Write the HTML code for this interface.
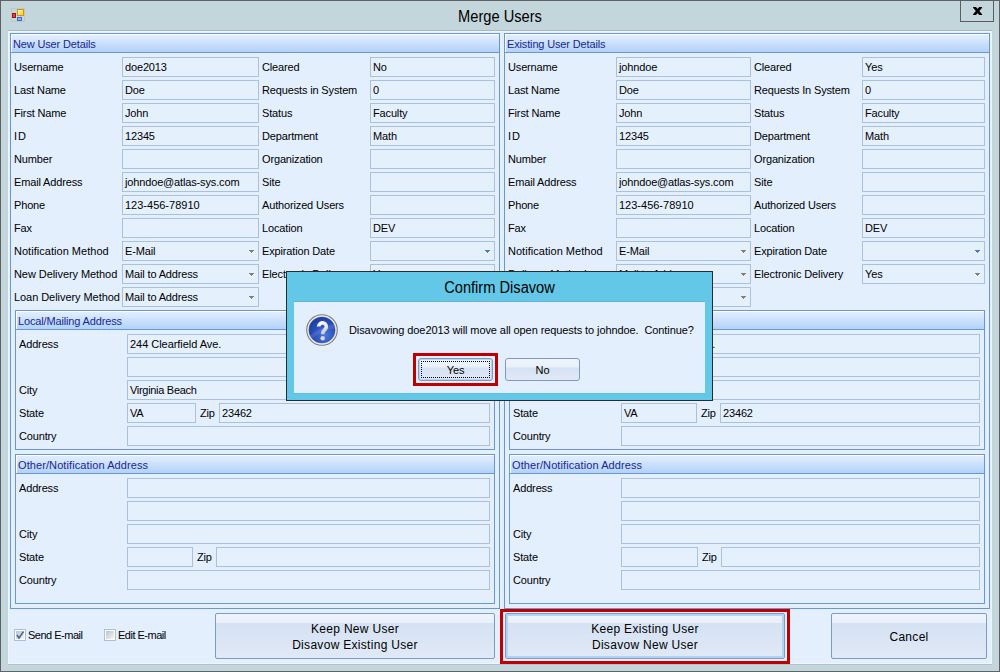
<!DOCTYPE html><html><head><meta charset="utf-8"><style>
html,body{margin:0;padding:0;}
body{width:1000px;height:672px;position:relative;overflow:hidden;background:#c3d6db;font-family:"Liberation Sans", sans-serif;}
.t{position:absolute;white-space:pre;line-height:20px;height:20px;letter-spacing:-0.15px;font-family:"Liberation Sans", sans-serif;}
.in{position:absolute;border:1px solid #abc0da;background:#e5f0fd;}
</style></head><body>
<div style="position:absolute;left:0px;top:0px;width:1000px;height:672px;border:1px solid #606166;box-sizing:border-box"></div>
<div style="position:absolute;left:11px;top:8px;width:14px;height:14px;box-sizing:border-box;border:1px solid #c8c4c2"></div>
<div style="position:absolute;left:17px;top:9px;width:7px;height:7px;box-sizing:border-box;border:1px solid #c79a10;background:linear-gradient(135deg,#fff3b0,#ffcc20)"></div>
<div style="position:absolute;left:12px;top:13px;width:4px;height:5px;box-sizing:border-box;border:1px solid #a81010;background:#e04040"></div>
<div style="position:absolute;left:17px;top:17px;width:5px;height:4px;box-sizing:border-box;border:1px solid #3a6ad0;background:#8ab4f8"></div>
<div class="t" style="left:0;width:1000px;text-align:center;top:6px;font-size:16px;line-height:22px;height:22px;color:#000;letter-spacing:0;transform:scaleX(0.915)">Merge Users</div>
<div style="position:absolute;left:960px;top:0px;width:34px;height:22px;border:1px solid #5a5d62;box-sizing:border-box"></div>
<svg style="position:absolute;left:972px;top:6px" width="12" height="10" viewBox="0 0 12 10"><defs><clipPath id="xc"><rect x="0" y="1" width="12" height="8"/></clipPath></defs><g clip-path="url(#xc)"><path d="M1.9 0.6 L9.3 9.4 M9.3 0.6 L1.9 9.4" stroke="#000" stroke-width="2.7" fill="none"/></g></svg>
<div style="position:absolute;left:8px;top:30px;width:984px;height:635px;background:#e3effd;border-top:1px solid #a9b9bd;border-bottom:1px solid #b4c3c7;box-sizing:border-box"></div>
<div style="position:absolute;left:8px;top:31px;width:984px;height:633px;border:1px solid #edf5fe;box-sizing:border-box"></div>
<div style="position:absolute;left:10px;top:33px;width:490px;height:576px;border:1px solid #6b97cf;box-sizing:border-box;background:#e3effd"></div>
<div style="position:absolute;left:11px;top:34px;width:488px;height:18px;box-sizing:border-box;border-left:1px solid #fff;border-top:1px solid #fff;background:linear-gradient(#e3eeff,#b1d2fb);border-bottom:0"></div>
<div style="position:absolute;left:10px;top:52px;width:490px;height:1px;background:#6b97cf"></div>
<div class="t" style="left:13px;top:34px;font-size:11px;color:#18288e;letter-spacing:-0.15px;">New User Details</div>
<div style="position:absolute;left:504px;top:33px;width:486px;height:576px;border:1px solid #6b97cf;box-sizing:border-box;background:#e3effd"></div>
<div style="position:absolute;left:505px;top:34px;width:484px;height:18px;box-sizing:border-box;border-left:1px solid #fff;border-top:1px solid #fff;background:linear-gradient(#e3eeff,#b1d2fb);border-bottom:0"></div>
<div style="position:absolute;left:504px;top:52px;width:486px;height:1px;background:#6b97cf"></div>
<div class="t" style="left:507px;top:34px;font-size:11px;color:#18288e;letter-spacing:-0.15px;">Existing User Details</div>
<div class="t" style="left:14px;top:57px;font-size:11px;color:#000;letter-spacing:-0.15px;">Username</div>
<div class="in" style="left:122px;top:57px;width:135px;height:18px;"></div>
<div class="t" style="left:125px;top:57px;font-size:11px;color:#000;letter-spacing:-0.15px;">doe2013</div>
<div class="t" style="left:262px;top:57px;font-size:11px;color:#000;letter-spacing:-0.15px;">Cleared</div>
<div class="in" style="left:370px;top:57px;width:123px;height:18px;"></div>
<div class="t" style="left:373px;top:57px;font-size:11px;color:#000;letter-spacing:-0.15px;">No</div>
<div class="t" style="left:14px;top:80px;font-size:11px;color:#000;letter-spacing:-0.15px;">Last Name</div>
<div class="in" style="left:122px;top:80px;width:135px;height:18px;"></div>
<div class="t" style="left:125px;top:80px;font-size:11px;color:#000;letter-spacing:-0.15px;">Doe</div>
<div class="t" style="left:262px;top:80px;font-size:11px;color:#000;letter-spacing:-0.15px;">Requests in System</div>
<div class="in" style="left:370px;top:80px;width:123px;height:18px;"></div>
<div class="t" style="left:373px;top:80px;font-size:11px;color:#000;letter-spacing:-0.15px;">0</div>
<div class="t" style="left:14px;top:103px;font-size:11px;color:#000;letter-spacing:-0.15px;">First Name</div>
<div class="in" style="left:122px;top:103px;width:135px;height:18px;"></div>
<div class="t" style="left:125px;top:103px;font-size:11px;color:#000;letter-spacing:-0.15px;">John</div>
<div class="t" style="left:262px;top:103px;font-size:11px;color:#000;letter-spacing:-0.15px;">Status</div>
<div class="in" style="left:370px;top:103px;width:123px;height:18px;"></div>
<div class="t" style="left:373px;top:103px;font-size:11px;color:#000;letter-spacing:-0.15px;">Faculty</div>
<div class="t" style="left:14px;top:126px;font-size:11px;color:#000;letter-spacing:1.0px;">ID</div>
<div class="in" style="left:122px;top:126px;width:135px;height:18px;"></div>
<div class="t" style="left:125px;top:126px;font-size:11px;color:#000;letter-spacing:-0.15px;">12345</div>
<div class="t" style="left:262px;top:126px;font-size:11px;color:#000;letter-spacing:-0.15px;">Department</div>
<div class="in" style="left:370px;top:126px;width:123px;height:18px;"></div>
<div class="t" style="left:373px;top:126px;font-size:11px;color:#000;letter-spacing:-0.15px;">Math</div>
<div class="t" style="left:14px;top:149px;font-size:11px;color:#000;letter-spacing:-0.15px;">Number</div>
<div class="in" style="left:122px;top:149px;width:135px;height:18px;"></div>
<div class="t" style="left:262px;top:149px;font-size:11px;color:#000;letter-spacing:-0.15px;">Organization</div>
<div class="in" style="left:370px;top:149px;width:123px;height:18px;"></div>
<div class="t" style="left:14px;top:172px;font-size:11px;color:#000;letter-spacing:-0.15px;">Email Address</div>
<div class="in" style="left:122px;top:172px;width:135px;height:18px;"></div>
<div class="t" style="left:125px;top:172px;font-size:11px;color:#000;letter-spacing:-0.15px;">johndoe@atlas-sys.com</div>
<div class="t" style="left:262px;top:172px;font-size:11px;color:#000;letter-spacing:-0.15px;">Site</div>
<div class="in" style="left:370px;top:172px;width:123px;height:18px;"></div>
<div class="t" style="left:14px;top:195px;font-size:11px;color:#000;letter-spacing:-0.15px;">Phone</div>
<div class="in" style="left:122px;top:195px;width:135px;height:18px;"></div>
<div class="t" style="left:125px;top:195px;font-size:11px;color:#000;letter-spacing:0.0px;">123-456-78910</div>
<div class="t" style="left:262px;top:195px;font-size:11px;color:#000;letter-spacing:-0.15px;">Authorized Users</div>
<div class="in" style="left:370px;top:195px;width:123px;height:18px;"></div>
<div class="t" style="left:14px;top:218px;font-size:11px;color:#000;letter-spacing:-0.15px;">Fax</div>
<div class="in" style="left:122px;top:218px;width:135px;height:18px;"></div>
<div class="t" style="left:262px;top:218px;font-size:11px;color:#000;letter-spacing:-0.15px;">Location</div>
<div class="in" style="left:370px;top:218px;width:123px;height:18px;"></div>
<div class="t" style="left:373px;top:218px;font-size:11px;color:#000;letter-spacing:-0.15px;">DEV</div>
<div class="t" style="left:14px;top:241px;font-size:11px;color:#000;letter-spacing:0.03px;">Notification Method</div>
<div class="in" style="left:122px;top:241px;width:135px;height:18px;"></div>
<div class="t" style="left:125px;top:241px;font-size:11px;color:#000;letter-spacing:-0.15px;">E-Mail</div>
<div style="position:absolute;left:249px;top:250px;width:5px;height:1px;background:#808080"></div><div style="position:absolute;left:250px;top:251px;width:3px;height:1px;background:#808080"></div><div style="position:absolute;left:251px;top:252px;width:1px;height:1px;background:#808080"></div><div style="position:absolute;left:249px;top:251px;width:1px;height:1px;background:#fff;opacity:.7"></div><div style="position:absolute;left:253px;top:251px;width:1px;height:1px;background:#fff;opacity:.7"></div><div style="position:absolute;left:250px;top:252px;width:1px;height:1px;background:#fff;opacity:.7"></div><div style="position:absolute;left:252px;top:252px;width:1px;height:1px;background:#fff;opacity:.7"></div><div style="position:absolute;left:251px;top:253px;width:1px;height:1px;background:#fff;opacity:.8"></div>
<div class="t" style="left:262px;top:241px;font-size:11px;color:#000;letter-spacing:-0.15px;">Expiration Date</div>
<div class="in" style="left:370px;top:241px;width:123px;height:18px;"></div>
<div style="position:absolute;left:485px;top:250px;width:5px;height:1px;background:#4b7bbb"></div><div style="position:absolute;left:486px;top:251px;width:3px;height:1px;background:#4b7bbb"></div><div style="position:absolute;left:487px;top:252px;width:1px;height:1px;background:#4b7bbb"></div><div style="position:absolute;left:485px;top:251px;width:1px;height:1px;background:#fff;opacity:.7"></div><div style="position:absolute;left:489px;top:251px;width:1px;height:1px;background:#fff;opacity:.7"></div><div style="position:absolute;left:486px;top:252px;width:1px;height:1px;background:#fff;opacity:.7"></div><div style="position:absolute;left:488px;top:252px;width:1px;height:1px;background:#fff;opacity:.7"></div><div style="position:absolute;left:487px;top:253px;width:1px;height:1px;background:#fff;opacity:.8"></div>
<div class="t" style="left:14px;top:264px;font-size:11px;color:#000;letter-spacing:-0.07px;">New Delivery Method</div>
<div class="in" style="left:122px;top:264px;width:135px;height:18px;"></div>
<div class="t" style="left:125px;top:264px;font-size:11px;color:#000;letter-spacing:-0.15px;">Mail to Address</div>
<div style="position:absolute;left:249px;top:273px;width:5px;height:1px;background:#808080"></div><div style="position:absolute;left:250px;top:274px;width:3px;height:1px;background:#808080"></div><div style="position:absolute;left:251px;top:275px;width:1px;height:1px;background:#808080"></div><div style="position:absolute;left:249px;top:274px;width:1px;height:1px;background:#fff;opacity:.7"></div><div style="position:absolute;left:253px;top:274px;width:1px;height:1px;background:#fff;opacity:.7"></div><div style="position:absolute;left:250px;top:275px;width:1px;height:1px;background:#fff;opacity:.7"></div><div style="position:absolute;left:252px;top:275px;width:1px;height:1px;background:#fff;opacity:.7"></div><div style="position:absolute;left:251px;top:276px;width:1px;height:1px;background:#fff;opacity:.8"></div>
<div class="t" style="left:262px;top:264px;font-size:11px;color:#000;letter-spacing:-0.1px;">Electronic Delivery</div>
<div class="in" style="left:370px;top:264px;width:123px;height:18px;"></div>
<div class="t" style="left:373px;top:264px;font-size:11px;color:#000;letter-spacing:-0.15px;">Yes</div>
<div style="position:absolute;left:485px;top:273px;width:5px;height:1px;background:#808080"></div><div style="position:absolute;left:486px;top:274px;width:3px;height:1px;background:#808080"></div><div style="position:absolute;left:487px;top:275px;width:1px;height:1px;background:#808080"></div><div style="position:absolute;left:485px;top:274px;width:1px;height:1px;background:#fff;opacity:.7"></div><div style="position:absolute;left:489px;top:274px;width:1px;height:1px;background:#fff;opacity:.7"></div><div style="position:absolute;left:486px;top:275px;width:1px;height:1px;background:#fff;opacity:.7"></div><div style="position:absolute;left:488px;top:275px;width:1px;height:1px;background:#fff;opacity:.7"></div><div style="position:absolute;left:487px;top:276px;width:1px;height:1px;background:#fff;opacity:.8"></div>
<div class="t" style="left:14px;top:287px;font-size:11px;color:#000;letter-spacing:-0.06px;">Loan Delivery Method</div>
<div class="in" style="left:122px;top:287px;width:135px;height:18px;"></div>
<div class="t" style="left:125px;top:287px;font-size:11px;color:#000;letter-spacing:-0.15px;">Mail to Address</div>
<div style="position:absolute;left:249px;top:296px;width:5px;height:1px;background:#808080"></div><div style="position:absolute;left:250px;top:297px;width:3px;height:1px;background:#808080"></div><div style="position:absolute;left:251px;top:298px;width:1px;height:1px;background:#808080"></div><div style="position:absolute;left:249px;top:297px;width:1px;height:1px;background:#fff;opacity:.7"></div><div style="position:absolute;left:253px;top:297px;width:1px;height:1px;background:#fff;opacity:.7"></div><div style="position:absolute;left:250px;top:298px;width:1px;height:1px;background:#fff;opacity:.7"></div><div style="position:absolute;left:252px;top:298px;width:1px;height:1px;background:#fff;opacity:.7"></div><div style="position:absolute;left:251px;top:299px;width:1px;height:1px;background:#fff;opacity:.8"></div>
<div class="t" style="left:508px;top:57px;font-size:11px;color:#000;letter-spacing:-0.15px;">Username</div>
<div class="in" style="left:616px;top:57px;width:133px;height:18px;"></div>
<div class="t" style="left:619px;top:57px;font-size:11px;color:#000;letter-spacing:-0.15px;">johndoe</div>
<div class="t" style="left:754px;top:57px;font-size:11px;color:#000;letter-spacing:-0.15px;">Cleared</div>
<div class="in" style="left:862px;top:57px;width:121px;height:18px;"></div>
<div class="t" style="left:865px;top:57px;font-size:11px;color:#000;letter-spacing:-0.15px;">Yes</div>
<div class="t" style="left:508px;top:80px;font-size:11px;color:#000;letter-spacing:-0.15px;">Last Name</div>
<div class="in" style="left:616px;top:80px;width:133px;height:18px;"></div>
<div class="t" style="left:619px;top:80px;font-size:11px;color:#000;letter-spacing:-0.15px;">Doe</div>
<div class="t" style="left:754px;top:80px;font-size:11px;color:#000;letter-spacing:-0.15px;">Requests In System</div>
<div class="in" style="left:862px;top:80px;width:121px;height:18px;"></div>
<div class="t" style="left:865px;top:80px;font-size:11px;color:#000;letter-spacing:-0.15px;">0</div>
<div class="t" style="left:508px;top:103px;font-size:11px;color:#000;letter-spacing:-0.15px;">First Name</div>
<div class="in" style="left:616px;top:103px;width:133px;height:18px;"></div>
<div class="t" style="left:619px;top:103px;font-size:11px;color:#000;letter-spacing:-0.15px;">John</div>
<div class="t" style="left:754px;top:103px;font-size:11px;color:#000;letter-spacing:-0.15px;">Status</div>
<div class="in" style="left:862px;top:103px;width:121px;height:18px;"></div>
<div class="t" style="left:865px;top:103px;font-size:11px;color:#000;letter-spacing:-0.15px;">Faculty</div>
<div class="t" style="left:508px;top:126px;font-size:11px;color:#000;letter-spacing:1.0px;">ID</div>
<div class="in" style="left:616px;top:126px;width:133px;height:18px;"></div>
<div class="t" style="left:619px;top:126px;font-size:11px;color:#000;letter-spacing:-0.15px;">12345</div>
<div class="t" style="left:754px;top:126px;font-size:11px;color:#000;letter-spacing:-0.15px;">Department</div>
<div class="in" style="left:862px;top:126px;width:121px;height:18px;"></div>
<div class="t" style="left:865px;top:126px;font-size:11px;color:#000;letter-spacing:-0.15px;">Math</div>
<div class="t" style="left:508px;top:149px;font-size:11px;color:#000;letter-spacing:-0.15px;">Number</div>
<div class="in" style="left:616px;top:149px;width:133px;height:18px;"></div>
<div class="t" style="left:754px;top:149px;font-size:11px;color:#000;letter-spacing:-0.15px;">Organization</div>
<div class="in" style="left:862px;top:149px;width:121px;height:18px;"></div>
<div class="t" style="left:508px;top:172px;font-size:11px;color:#000;letter-spacing:-0.15px;">Email Address</div>
<div class="in" style="left:616px;top:172px;width:133px;height:18px;"></div>
<div class="t" style="left:619px;top:172px;font-size:11px;color:#000;letter-spacing:-0.15px;">johndoe@atlas-sys.com</div>
<div class="t" style="left:754px;top:172px;font-size:11px;color:#000;letter-spacing:-0.15px;">Site</div>
<div class="in" style="left:862px;top:172px;width:121px;height:18px;"></div>
<div class="t" style="left:508px;top:195px;font-size:11px;color:#000;letter-spacing:-0.15px;">Phone</div>
<div class="in" style="left:616px;top:195px;width:133px;height:18px;"></div>
<div class="t" style="left:619px;top:195px;font-size:11px;color:#000;letter-spacing:0.0px;">123-456-78910</div>
<div class="t" style="left:754px;top:195px;font-size:11px;color:#000;letter-spacing:-0.15px;">Authorized Users</div>
<div class="in" style="left:862px;top:195px;width:121px;height:18px;"></div>
<div class="t" style="left:508px;top:218px;font-size:11px;color:#000;letter-spacing:-0.15px;">Fax</div>
<div class="in" style="left:616px;top:218px;width:133px;height:18px;"></div>
<div class="t" style="left:754px;top:218px;font-size:11px;color:#000;letter-spacing:-0.15px;">Location</div>
<div class="in" style="left:862px;top:218px;width:121px;height:18px;"></div>
<div class="t" style="left:865px;top:218px;font-size:11px;color:#000;letter-spacing:-0.15px;">DEV</div>
<div class="t" style="left:508px;top:241px;font-size:11px;color:#000;letter-spacing:0.03px;">Notification Method</div>
<div class="in" style="left:616px;top:241px;width:133px;height:18px;"></div>
<div class="t" style="left:619px;top:241px;font-size:11px;color:#000;letter-spacing:-0.15px;">E-Mail</div>
<div style="position:absolute;left:741px;top:250px;width:5px;height:1px;background:#808080"></div><div style="position:absolute;left:742px;top:251px;width:3px;height:1px;background:#808080"></div><div style="position:absolute;left:743px;top:252px;width:1px;height:1px;background:#808080"></div><div style="position:absolute;left:741px;top:251px;width:1px;height:1px;background:#fff;opacity:.7"></div><div style="position:absolute;left:745px;top:251px;width:1px;height:1px;background:#fff;opacity:.7"></div><div style="position:absolute;left:742px;top:252px;width:1px;height:1px;background:#fff;opacity:.7"></div><div style="position:absolute;left:744px;top:252px;width:1px;height:1px;background:#fff;opacity:.7"></div><div style="position:absolute;left:743px;top:253px;width:1px;height:1px;background:#fff;opacity:.8"></div>
<div class="t" style="left:754px;top:241px;font-size:11px;color:#000;letter-spacing:-0.15px;">Expiration Date</div>
<div class="in" style="left:862px;top:241px;width:121px;height:18px;"></div>
<div style="position:absolute;left:975px;top:250px;width:5px;height:1px;background:#4b7bbb"></div><div style="position:absolute;left:976px;top:251px;width:3px;height:1px;background:#4b7bbb"></div><div style="position:absolute;left:977px;top:252px;width:1px;height:1px;background:#4b7bbb"></div><div style="position:absolute;left:975px;top:251px;width:1px;height:1px;background:#fff;opacity:.7"></div><div style="position:absolute;left:979px;top:251px;width:1px;height:1px;background:#fff;opacity:.7"></div><div style="position:absolute;left:976px;top:252px;width:1px;height:1px;background:#fff;opacity:.7"></div><div style="position:absolute;left:978px;top:252px;width:1px;height:1px;background:#fff;opacity:.7"></div><div style="position:absolute;left:977px;top:253px;width:1px;height:1px;background:#fff;opacity:.8"></div>
<div class="t" style="left:508px;top:264px;font-size:11px;color:#000;letter-spacing:-0.07px;">Delivery Method</div>
<div class="in" style="left:616px;top:264px;width:133px;height:18px;"></div>
<div class="t" style="left:619px;top:264px;font-size:11px;color:#000;letter-spacing:-0.15px;">Mail to Address</div>
<div style="position:absolute;left:741px;top:273px;width:5px;height:1px;background:#808080"></div><div style="position:absolute;left:742px;top:274px;width:3px;height:1px;background:#808080"></div><div style="position:absolute;left:743px;top:275px;width:1px;height:1px;background:#808080"></div><div style="position:absolute;left:741px;top:274px;width:1px;height:1px;background:#fff;opacity:.7"></div><div style="position:absolute;left:745px;top:274px;width:1px;height:1px;background:#fff;opacity:.7"></div><div style="position:absolute;left:742px;top:275px;width:1px;height:1px;background:#fff;opacity:.7"></div><div style="position:absolute;left:744px;top:275px;width:1px;height:1px;background:#fff;opacity:.7"></div><div style="position:absolute;left:743px;top:276px;width:1px;height:1px;background:#fff;opacity:.8"></div>
<div class="t" style="left:754px;top:264px;font-size:11px;color:#000;letter-spacing:-0.1px;">Electronic Delivery</div>
<div class="in" style="left:862px;top:264px;width:121px;height:18px;"></div>
<div class="t" style="left:865px;top:264px;font-size:11px;color:#000;letter-spacing:-0.15px;">Yes</div>
<div style="position:absolute;left:975px;top:273px;width:5px;height:1px;background:#808080"></div><div style="position:absolute;left:976px;top:274px;width:3px;height:1px;background:#808080"></div><div style="position:absolute;left:977px;top:275px;width:1px;height:1px;background:#808080"></div><div style="position:absolute;left:975px;top:274px;width:1px;height:1px;background:#fff;opacity:.7"></div><div style="position:absolute;left:979px;top:274px;width:1px;height:1px;background:#fff;opacity:.7"></div><div style="position:absolute;left:976px;top:275px;width:1px;height:1px;background:#fff;opacity:.7"></div><div style="position:absolute;left:978px;top:275px;width:1px;height:1px;background:#fff;opacity:.7"></div><div style="position:absolute;left:977px;top:276px;width:1px;height:1px;background:#fff;opacity:.8"></div>
<div class="t" style="left:508px;top:287px;font-size:11px;color:#000;letter-spacing:-0.06px;">Loan Delivery Method</div>
<div class="in" style="left:616px;top:287px;width:133px;height:18px;"></div>
<div class="t" style="left:619px;top:287px;font-size:11px;color:#000;letter-spacing:-0.15px;">Mail to Address</div>
<div style="position:absolute;left:741px;top:296px;width:5px;height:1px;background:#808080"></div><div style="position:absolute;left:742px;top:297px;width:3px;height:1px;background:#808080"></div><div style="position:absolute;left:743px;top:298px;width:1px;height:1px;background:#808080"></div><div style="position:absolute;left:741px;top:297px;width:1px;height:1px;background:#fff;opacity:.7"></div><div style="position:absolute;left:745px;top:297px;width:1px;height:1px;background:#fff;opacity:.7"></div><div style="position:absolute;left:742px;top:298px;width:1px;height:1px;background:#fff;opacity:.7"></div><div style="position:absolute;left:744px;top:298px;width:1px;height:1px;background:#fff;opacity:.7"></div><div style="position:absolute;left:743px;top:299px;width:1px;height:1px;background:#fff;opacity:.8"></div>
<div style="position:absolute;left:15px;top:310px;width:480px;height:140px;border:1px solid #6b97cf;box-sizing:border-box;background:#e3effd"></div>
<div style="position:absolute;left:16px;top:311px;width:478px;height:18px;box-sizing:border-box;border-left:1px solid #fff;border-top:1px solid #fff;background:linear-gradient(#e3eeff,#b1d2fb);border-bottom:0"></div>
<div style="position:absolute;left:15px;top:329px;width:480px;height:1px;background:#6b97cf"></div>
<div class="t" style="left:18px;top:311px;font-size:11px;color:#18288e;letter-spacing:-0.15px;">Local/Mailing Address</div>
<div class="t" style="left:19px;top:334px;font-size:11px;color:#000;letter-spacing:-0.15px;">Address</div>
<div class="in" style="left:127px;top:334px;width:361px;height:18px;"></div>
<div class="t" style="left:130px;top:334px;font-size:11px;color:#000;letter-spacing:-0.04px;">244 Clearfield Ave.</div>
<div class="in" style="left:127px;top:357px;width:361px;height:18px;"></div>
<div class="t" style="left:19px;top:380px;font-size:11px;color:#000;letter-spacing:-0.15px;">City</div>
<div class="in" style="left:127px;top:380px;width:361px;height:18px;"></div>
<div class="t" style="left:130px;top:380px;font-size:11px;color:#000;letter-spacing:-0.3px;">Virginia Beach</div>
<div class="t" style="left:19px;top:403px;font-size:11px;color:#000;letter-spacing:-0.15px;">State</div>
<div class="in" style="left:127px;top:403px;width:67px;height:18px;"></div>
<div class="t" style="left:130px;top:403px;font-size:11px;color:#000;letter-spacing:-0.15px;">VA</div>
<div class="t" style="left:200px;top:403px;font-size:11px;color:#000;letter-spacing:-0.15px;">Zip</div>
<div class="in" style="left:219px;top:403px;width:269px;height:18px;"></div>
<div class="t" style="left:222px;top:403px;font-size:11px;color:#000;letter-spacing:-0.15px;">23462</div>
<div class="t" style="left:19px;top:426px;font-size:11px;color:#000;letter-spacing:-0.15px;">Country</div>
<div class="in" style="left:127px;top:426px;width:361px;height:18px;"></div>
<div style="position:absolute;left:15px;top:454px;width:480px;height:150px;border:1px solid #6b97cf;box-sizing:border-box;background:#e3effd"></div>
<div style="position:absolute;left:16px;top:455px;width:478px;height:18px;box-sizing:border-box;border-left:1px solid #fff;border-top:1px solid #fff;background:linear-gradient(#e3eeff,#b1d2fb);border-bottom:0"></div>
<div style="position:absolute;left:15px;top:473px;width:480px;height:1px;background:#6b97cf"></div>
<div class="t" style="left:18px;top:455px;font-size:11px;color:#18288e;letter-spacing:0.09px;">Other/Notification Address</div>
<div class="t" style="left:19px;top:478px;font-size:11px;color:#000;letter-spacing:-0.15px;">Address</div>
<div class="in" style="left:127px;top:478px;width:361px;height:18px;"></div>
<div class="in" style="left:127px;top:501px;width:361px;height:18px;"></div>
<div class="t" style="left:19px;top:524px;font-size:11px;color:#000;letter-spacing:-0.15px;">City</div>
<div class="in" style="left:127px;top:524px;width:361px;height:18px;"></div>
<div class="t" style="left:19px;top:547px;font-size:11px;color:#000;letter-spacing:-0.15px;">State</div>
<div class="in" style="left:127px;top:547px;width:64px;height:18px;"></div>
<div class="t" style="left:197px;top:547px;font-size:11px;color:#000;letter-spacing:-0.15px;">Zip</div>
<div class="in" style="left:216px;top:547px;width:272px;height:18px;"></div>
<div class="t" style="left:19px;top:570px;font-size:11px;color:#000;letter-spacing:-0.15px;">Country</div>
<div class="in" style="left:127px;top:570px;width:361px;height:18px;"></div>
<div style="position:absolute;left:509px;top:310px;width:476px;height:140px;border:1px solid #6b97cf;box-sizing:border-box;background:#e3effd"></div>
<div style="position:absolute;left:510px;top:311px;width:474px;height:18px;box-sizing:border-box;border-left:1px solid #fff;border-top:1px solid #fff;background:linear-gradient(#e3eeff,#b1d2fb);border-bottom:0"></div>
<div style="position:absolute;left:509px;top:329px;width:476px;height:1px;background:#6b97cf"></div>
<div class="t" style="left:512px;top:311px;font-size:11px;color:#18288e;letter-spacing:-0.15px;">Local/Mailing Address</div>
<div class="t" style="left:513px;top:334px;font-size:11px;color:#000;letter-spacing:-0.15px;">Address</div>
<div class="in" style="left:621px;top:334px;width:357px;height:18px;"></div>
<div class="t" style="left:624px;top:334px;font-size:11px;color:#000;letter-spacing:-0.04px;">244 Clearfield Ave.</div>
<div class="in" style="left:621px;top:357px;width:357px;height:18px;"></div>
<div class="t" style="left:513px;top:380px;font-size:11px;color:#000;letter-spacing:-0.15px;">City</div>
<div class="in" style="left:621px;top:380px;width:357px;height:18px;"></div>
<div class="t" style="left:624px;top:380px;font-size:11px;color:#000;letter-spacing:-0.3px;">Virginia Beach</div>
<div class="t" style="left:513px;top:403px;font-size:11px;color:#000;letter-spacing:-0.15px;">State</div>
<div class="in" style="left:621px;top:403px;width:74px;height:18px;"></div>
<div class="t" style="left:624px;top:403px;font-size:11px;color:#000;letter-spacing:-0.15px;">VA</div>
<div class="t" style="left:701px;top:403px;font-size:11px;color:#000;letter-spacing:-0.15px;">Zip</div>
<div class="in" style="left:720px;top:403px;width:258px;height:18px;"></div>
<div class="t" style="left:723px;top:403px;font-size:11px;color:#000;letter-spacing:-0.15px;">23462</div>
<div class="t" style="left:513px;top:426px;font-size:11px;color:#000;letter-spacing:-0.15px;">Country</div>
<div class="in" style="left:621px;top:426px;width:357px;height:18px;"></div>
<div style="position:absolute;left:509px;top:454px;width:476px;height:150px;border:1px solid #6b97cf;box-sizing:border-box;background:#e3effd"></div>
<div style="position:absolute;left:510px;top:455px;width:474px;height:18px;box-sizing:border-box;border-left:1px solid #fff;border-top:1px solid #fff;background:linear-gradient(#e3eeff,#b1d2fb);border-bottom:0"></div>
<div style="position:absolute;left:509px;top:473px;width:476px;height:1px;background:#6b97cf"></div>
<div class="t" style="left:512px;top:455px;font-size:11px;color:#18288e;letter-spacing:0.09px;">Other/Notification Address</div>
<div class="t" style="left:513px;top:478px;font-size:11px;color:#000;letter-spacing:-0.15px;">Address</div>
<div class="in" style="left:621px;top:478px;width:357px;height:18px;"></div>
<div class="in" style="left:621px;top:501px;width:357px;height:18px;"></div>
<div class="t" style="left:513px;top:524px;font-size:11px;color:#000;letter-spacing:-0.15px;">City</div>
<div class="in" style="left:621px;top:524px;width:357px;height:18px;"></div>
<div class="t" style="left:513px;top:547px;font-size:11px;color:#000;letter-spacing:-0.15px;">State</div>
<div class="in" style="left:621px;top:547px;width:75px;height:18px;"></div>
<div class="t" style="left:702px;top:547px;font-size:11px;color:#000;letter-spacing:-0.15px;">Zip</div>
<div class="in" style="left:721px;top:547px;width:257px;height:18px;"></div>
<div class="t" style="left:513px;top:570px;font-size:11px;color:#000;letter-spacing:-0.15px;">Country</div>
<div class="in" style="left:621px;top:570px;width:357px;height:18px;"></div>
<div style="position:absolute;left:14px;top:629px;width:12px;height:12px;box-sizing:border-box;border:1px solid #a9bfda;background:#fff"></div>
<div style="position:absolute;left:16px;top:631px;width:8px;height:8px;background:linear-gradient(135deg,#b9c2cc,#f6f7f9)"></div>
<svg style="position:absolute;left:14px;top:629px" width="12" height="12" viewBox="0 0 12 12"><path d="M3 6 L5 9 L9.5 2.5" stroke="#4a6a98" stroke-width="1.6" fill="none"/></svg>
<div class="t" style="left:28px;top:625px;font-size:11px;color:#000;letter-spacing:-0.5px;">Send E-mail</div>
<div style="position:absolute;left:104px;top:629px;width:12px;height:12px;box-sizing:border-box;border:1px solid #a9bfda;background:#fff"></div>
<div style="position:absolute;left:106px;top:631px;width:8px;height:8px;background:linear-gradient(135deg,#b9c2cc,#f6f7f9)"></div>
<div class="t" style="left:118px;top:625px;font-size:11px;color:#000;letter-spacing:-0.5px;">Edit E-mail</div>
<div style="position:absolute;left:215px;top:613px;width:280px;height:46px;box-sizing:border-box;border:1px solid #7f9abd;border-radius:2px;background:linear-gradient(#eef4fb 0%,#e9f0fa 20%,#d5e2f3 21%,#e0e9f6 100%);"></div>
<div class="t" style="left:215px;width:280px;text-align:center;top:619px;font-size:12px;color:#000;letter-spacing:0.3px">Keep New User</div>
<div class="t" style="left:215px;width:280px;text-align:center;top:635px;font-size:12px;color:#000;letter-spacing:0.3px">Disavow Existing User</div>
<div style="position:absolute;left:505px;top:613px;width:280px;height:46px;box-sizing:border-box;border:1px solid #7f9abd;border-radius:2px;background:linear-gradient(#eef4fb 0%,#e9f0fa 20%,#d5e2f3 21%,#e0e9f6 100%);box-shadow:inset 0 0 0 2px #b3d3f5"></div>
<div class="t" style="left:505px;width:280px;text-align:center;top:619px;font-size:12px;color:#000;letter-spacing:0.3px">Keep Existing User</div>
<div class="t" style="left:505px;width:280px;text-align:center;top:635px;font-size:12px;color:#000;letter-spacing:0.3px">Disavow New User</div>
<div style="position:absolute;left:831px;top:613px;width:156px;height:46px;box-sizing:border-box;border:1px solid #7f9abd;border-radius:2px;background:linear-gradient(#eef4fb 0%,#e9f0fa 20%,#d5e2f3 21%,#e0e9f6 100%);"></div>
<div class="t" style="left:831px;width:156px;text-align:center;top:627px;font-size:12px;color:#000;letter-spacing:0.3px">Cancel</div>
<div style="position:absolute;left:500px;top:609px;width:290px;height:55px;border:3px solid #c00000;box-sizing:border-box"></div>
<div style="position:absolute;left:286px;top:271px;width:427px;height:130px;background:#63c8e7;border:1px solid #2b2b2b;box-sizing:border-box"></div>
<div class="t" style="left:286px;width:427px;text-align:center;top:277px;font-size:16px;line-height:22px;height:22px;color:#000;letter-spacing:0;transform:scaleX(0.915)">Confirm Disavow</div>
<div style="position:absolute;left:294px;top:301px;width:411px;height:92px;background:#e3effd;border-top:1px solid #66afcd;box-sizing:border-box"></div>
<div style="position:absolute;left:294px;top:393px;width:411px;height:1px;background:#5cbddf"></div>
<svg style="position:absolute;left:306px;top:314px" width="32" height="32" viewBox="0 0 32 32">
<defs><radialGradient id="qg" cx="0.62" cy="0.7" r="0.75"><stop offset="0" stop-color="#4d78da"/><stop offset="0.45" stop-color="#2f56c2"/><stop offset="1" stop-color="#1d3a9e"/></radialGradient>
<linearGradient id="wg" x1="0" y1="0" x2="0.3" y2="1"><stop offset="0" stop-color="#ffffff"/><stop offset="1" stop-color="#cfcfcf"/></linearGradient></defs>
<circle cx="16" cy="16" r="15.8" fill="#7a7a7a"/><circle cx="16" cy="16" r="14.7" fill="#f2f2f2"/><circle cx="16" cy="16" r="13.6" fill="#9aa4b8"/><circle cx="16" cy="16" r="13.1" fill="url(#qg)"/>
<path d="M2.9 22 Q16 12 29 9.5 L30 14 Q17 16 5 25 Z" fill="#ffffff" opacity="0.10"/>
<path d="M12.7 12.5 A3.8 3.8 0 1 1 19.3 15.2 C17.7 16.6 16.7 17.3 16.7 20.3" stroke="url(#wg)" stroke-width="3.7" fill="none"/>
<circle cx="16.7" cy="24.3" r="2.25" fill="#d8d8d8"/></svg>
<div class="t" style="left:349px;top:320px;font-size:11px;color:#000;letter-spacing:-0.09px;">Disavowing doe2013 will move all open requests to johndoe.  Continue?</div>
<div style="position:absolute;left:418px;top:358px;width:75px;height:23px;box-sizing:border-box;border:1px solid #7f9abd;border-radius:3px;background:linear-gradient(#eef4fb 0%,#e9f0fa 40%,#d5e2f3 41%,#e0e9f6 100%);box-shadow:inset 0 0 0 1px #b5d3f3"></div>
<div style="position:absolute;left:421px;top:361px;width:69px;height:17px;box-sizing:border-box;border:1px dotted #000"></div>
<div class="t" style="left:418px;width:75px;text-align:center;top:360px;font-size:11px;color:#000">Yes</div>
<div style="position:absolute;left:505px;top:358px;width:75px;height:23px;box-sizing:border-box;border:1px solid #7f9abd;border-radius:3px;background:linear-gradient(#eef4fb 0%,#e9f0fa 40%,#d5e2f3 41%,#e0e9f6 100%);"></div>
<div class="t" style="left:505px;width:75px;text-align:center;top:360px;font-size:11px;color:#000">No</div>
<div style="position:absolute;left:413px;top:353px;width:85px;height:33px;border:3px solid #c00000;box-sizing:border-box"></div>
</body></html>
